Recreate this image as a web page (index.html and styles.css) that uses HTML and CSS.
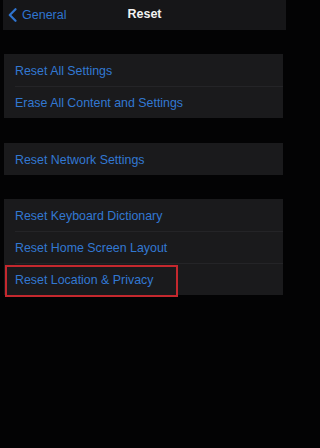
FILE: index.html
```html
<!DOCTYPE html>
<html>
<head>
<meta charset="utf-8">
<link rel="stylesheet" href="styles.css">
</head>
<body>
<div class="screen">
  <header class="nav">
    <div class="back">
      <svg class="chev" width="9" height="14" viewBox="0 0 9 14"><path d="M7.5 1.2 L1.8 7 L7.5 12.8" fill="none" stroke="#2f74cf" stroke-width="2.2" stroke-linecap="round" stroke-linejoin="round"/></svg>
      <span class="back-label">General</span>
    </div>
    <div class="title">Reset</div>
  </header>

  <section class="group g1">
    <div class="row">Reset All Settings</div>
    <div class="row">Erase All Content and Settings</div>
  </section>

  <section class="group g2">
    <div class="row">Reset Network Settings</div>
  </section>

  <section class="group g3">
    <div class="row">Reset Keyboard Dictionary</div>
    <div class="row">Reset Home Screen Layout</div>
    <div class="row highlighted">Reset Location &amp; Privacy<span class="mark"></span></div>
  </section>
</div>
</body>
</html>
```

FILE: styles.css
```css
html, body {
  margin: 0;
  padding: 0;
  background: #030304;
}
.screen {
  width: 289px;
  height: 448px;
  font-family: "Liberation Sans", Arial, sans-serif;
  overflow: hidden;
}
.nav {
  position: relative;
  height: 30px;
  margin: 0 3px;
  background: #161618;
  display: flex;
  align-items: center;
}
.back {
  display: flex;
  align-items: center;
  gap: 5px;
  padding-left: 5px;
}
.chev {
  display: block;
}
.back-label {
  color: #2f74cf;
  font-size: 12.5px;
}
.title {
  position: absolute;
  left: 0;
  right: 0;
  top: 0;
  height: 30px;
  line-height: 28px;
  text-align: center;
  color: #f2f2f2;
  font-weight: bold;
  font-size: 12.5px;
  pointer-events: none;
}
.group {
  margin-left: 4px;
  width: 279px;
  background: #1a1a1c;
}
.g1 { margin-top: 24px; }
.g2 { margin-top: 25px; }
.g3 { margin-top: 24px; }
.row {
  position: relative;
  box-sizing: border-box;
  height: 32px;
  line-height: 30px;
  padding-top: 2px;
  padding-left: 11px;
  color: #3278d2;
  font-size: 12.4px;
}
.row + .row::before {
  content: "";
  position: absolute;
  left: 11px;
  right: 0;
  top: 0;
  height: 1px;
  background: #242427;
}
.mark {
  position: absolute;
  left: 1px;
  top: 2px;
  width: 169px;
  height: 28px;
  border: 2px solid #c4282e;
}
```
